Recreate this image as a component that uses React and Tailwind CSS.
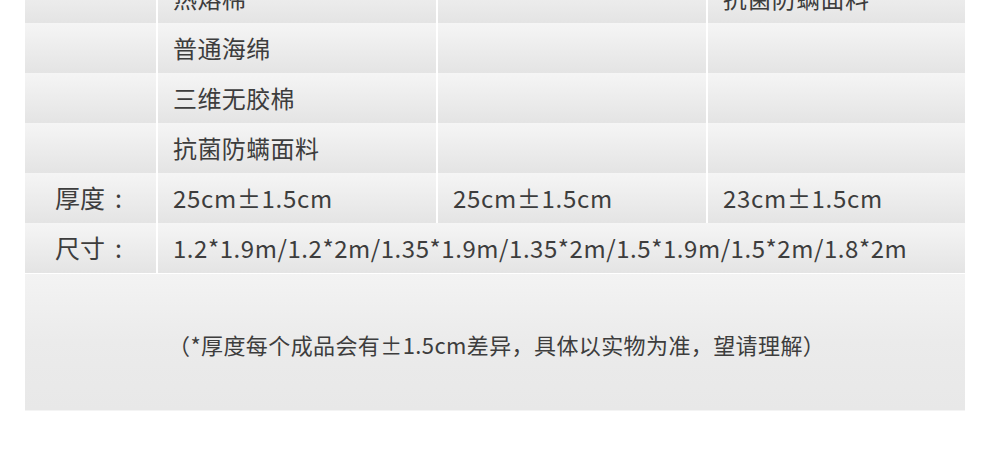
import React from 'react';

const cell = 'h-[50px] flex items-center bg-linear-to-b from-[#f5f5f5] to-[#e4e4e4]';

const materialRows = [
  ['热熔棉', '', '抗菌防螨面料'],
  ['普通海绵', '', ''],
  ['三维无胶棉', '', ''],
  ['抗菌防螨面料', '', ''],
];

function Label({ children }) {
  return (
    <div className={`${cell} pl-[30px] text-[25px]`}>
      {children}
      <span className="ml-[10px]">:</span>
    </div>
  );
}

export default function App() {
  return (
    <div className="w-[990px] h-[469px] bg-white overflow-hidden font-['Noto_Sans_CJK_SC','Noto_Sans',sans-serif] text-[#3d3d3d]">
      <div className="ml-[25px] w-[940px] -mt-[27px]">
        <div className="grid grid-cols-[131px_278px_268px_257px] gap-x-[2px]">
          {materialRows.map((row, i) => (
            <React.Fragment key={i}>
              <div className={cell}></div>
              {row.map((t, j) => (
                <div key={j} className={`${cell} pl-[15px] text-[24px] tracking-[0.4px]`}>
                  {t}
                </div>
              ))}
            </React.Fragment>
          ))}

          <Label>厚度</Label>
          <div className={`${cell} pl-[15px] text-[24px] tracking-[0.7px]`}>25cm±1.5cm</div>
          <div className={`${cell} pl-[15px] text-[24px] tracking-[0.7px]`}>25cm±1.5cm</div>
          <div className={`${cell} pl-[15px] text-[24px] tracking-[0.7px]`}>23cm±1.5cm</div>

          <Label>尺寸</Label>
          <div className={`${cell} col-span-3 pl-[15px] text-[24px] tracking-[0.55px]`}>
            1.2*1.9m/1.2*2m/1.35*1.9m/1.35*2m/1.5*1.9m/1.5*2m/1.8*2m
          </div>
        </div>

        <div className="mt-[1px] h-[137px] flex items-center pl-[143px] pt-[4px] bg-linear-to-b from-[#f3f3f3] via-[#ebebeb] to-[#e8e8e8] border-b border-[#f4f4f4] text-[22px] tracking-[0.4px]">
          （*厚度每个成品会有±1.5cm差异，具体以实物为准，望请理解）
        </div>
      </div>
    </div>
  );
}
